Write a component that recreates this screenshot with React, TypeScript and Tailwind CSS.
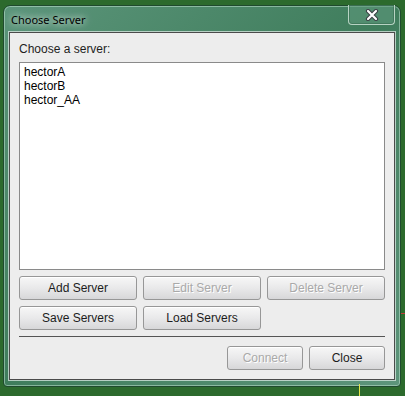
import React from 'react';

const servers = ['hectorA', 'hectorB', 'hector_AA'];

type BtnProps = { label: string; disabled?: boolean };

function SwingButton({ label, disabled }: BtnProps) {
  return (
    <button
      className={`h-[24px] w-full rounded-[3px] border border-[#979797] bg-gradient-to-b from-[#f7f7f7] via-[#e9e9ea] to-[#d7d7d9] text-[12px] leading-none shadow-[inset_0_1px_0_#ffffff] ${
        disabled ? 'text-[#a9a9a9] [text-shadow:1px_1px_0_#ffffff]' : 'text-[#1c1c1c]'
      }`}
    >
      {label}
    </button>
  );
}

function CloseGlyph() {
  return (
    <svg width="14" height="12" viewBox="0 0 14 12">
      <path d="M3 2 L11 10 M11 2 L3 10" stroke="#3a3f44" strokeWidth="4.2" strokeLinecap="round" />
      <path d="M3 2 L11 10 M11 2 L3 10" stroke="#ffffff" strokeWidth="2.2" strokeLinecap="round" />
    </svg>
  );
}

export default function App() {
  return (
    <div className="relative h-[396px] w-[405px] overflow-hidden bg-[#2c6a2d] pl-[3px] pt-[5px] font-['Liberation_Sans',Arial,sans-serif]">
      {/* dialog frame */}
      <div className="flex h-[382px] w-[398px] flex-col rounded-t-[7px] rounded-b-[4px] border border-[#1f4a2e] bg-gradient-to-br from-[#5b957a] via-[#3f7d5c] to-[#5d957b] px-[5px] pb-[6px] shadow-[inset_0_0_0_1px_rgba(190,225,205,0.55)]">
        {/* title bar */}
        <div className="flex h-[27px] items-start justify-between">
          <span className="mt-[7px] pl-[2px] font-['Noto_Sans','Open_Sans',sans-serif] text-[11px] leading-[14px] text-black [text-shadow:0_0_6px_rgba(255,255,255,0.9),0_0_14px_rgba(255,255,255,0.6)]">
            Choose Server
          </span>
          <div className="-mt-[1px] flex h-[20px] w-[47px] items-center justify-center rounded-b-[4px] border border-t-0 border-[#b7d3c3] bg-[#5e977b]/60 shadow-[inset_0_0_0_1px_rgba(40,90,60,0.35)]">
            <CloseGlyph />
          </div>
        </div>

        {/* content panel */}
        <div className="flex flex-1 flex-col border border-[#4b4b4b] bg-[#ededed] px-[9px] pt-[9px] pb-[9px] shadow-[0_0_0_1px_rgba(230,240,235,0.7)]">
          <div className="h-[14px] text-[12px] leading-[14px] text-[#1e1e1e]">Choose a server:</div>
          <div className="mt-[6px] h-[208px] border border-[#8a8a8a] bg-white pl-[4px] pt-[2px]">
            {servers.map((s) => (
              <div key={s} className="text-[12px] leading-[14px] text-black">
                {s}
              </div>
            ))}
          </div>
          <div className="mt-[6px] grid grid-cols-3 gap-[6px]">
            <SwingButton label="Add Server" />
            <SwingButton label="Edit Server" disabled />
            <SwingButton label="Delete Server" disabled />
            <SwingButton label="Save Servers" />
            <SwingButton label="Load Servers" />
          </div>
          <div className="mt-[6px] h-[1px] bg-[#555555]" />
          <div className="mt-[8px] flex justify-end gap-[6px]">
            <div className="w-[76px]">
              <SwingButton label="Connect" disabled />
            </div>
            <div className="w-[76px]">
              <SwingButton label="Close" />
            </div>
          </div>
        </div>
      </div>
      {/* desktop artifacts outside the window */}
      <span className="absolute left-[359px] top-[384px] h-[12px] w-[1px] bg-[#e6e64a]" />
      <span className="absolute left-[401px] top-[313px] h-[1px] w-[4px] bg-[#c43a3a]" />
    </div>
  );
}
